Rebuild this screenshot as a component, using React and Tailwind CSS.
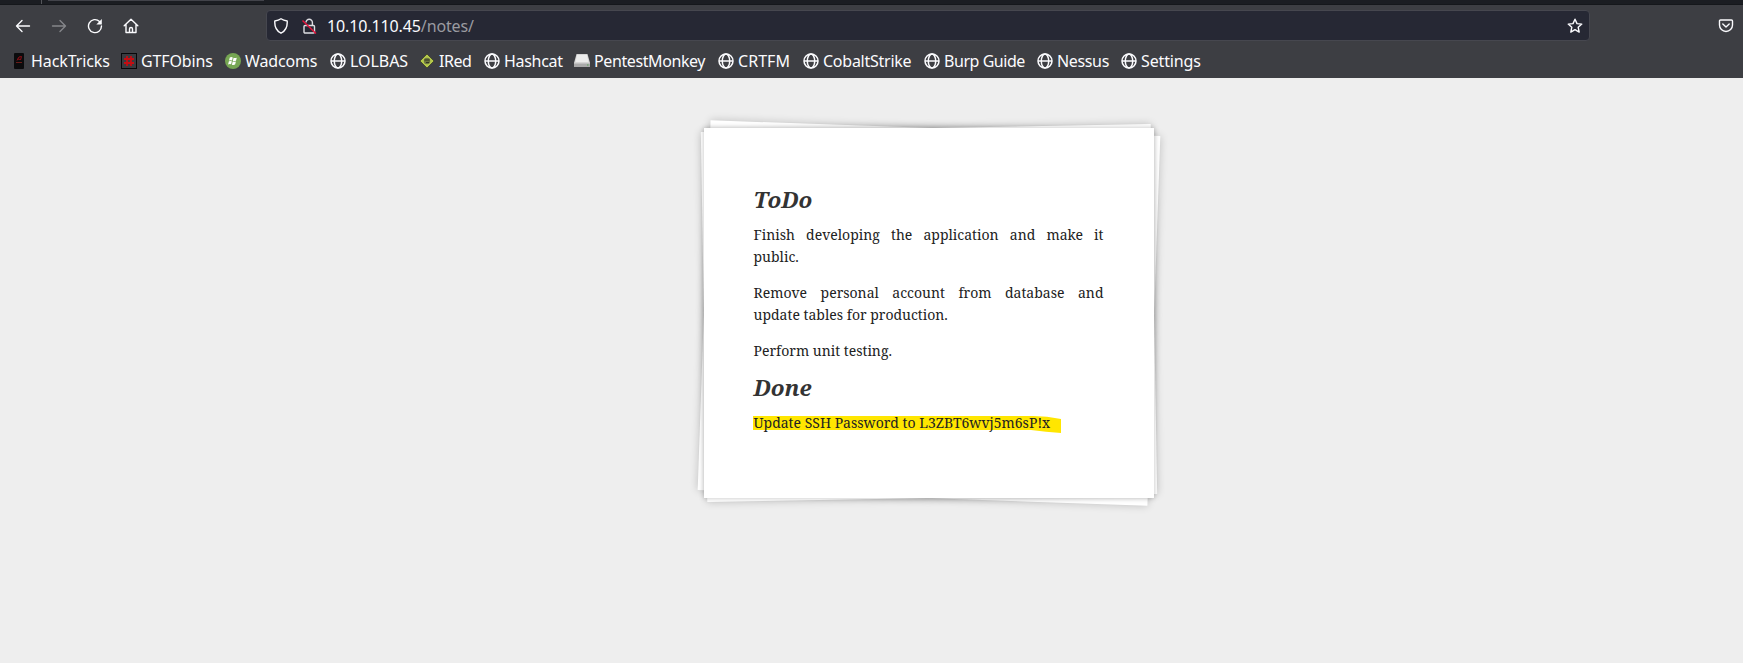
import React from "react";

const Globe = () => (
  <svg width="16" height="16" viewBox="0 0 16 16" fill="none" stroke="#fbfbfe" strokeWidth="1.5">
    <circle cx="8" cy="8" r="7" />
    <ellipse cx="8" cy="8" rx="3.7" ry="7" />
    <path d="M1 8h14" />
  </svg>
);
const Tricks = () => (
  <svg width="16" height="16" viewBox="0 0 16 16">
    <rect x="3" width="10" height="16" rx="1" fill="#0b0b0d" />
    <path d="M6 7.5 8 4l2.500-.5L9.500 7M6.500 6l3 .5" stroke="#8d0f16" fill="none" />
    <path d="M5 9.500h6" stroke="#6a1c18" />
  </svg>
);
const Hash = () => (
  <svg width="16" height="16" viewBox="0 0 16 16">
    <rect x=".5" y=".5" width="15" height="15" fill="#3a3b40" stroke="#08080a" />
    <path d="M6 3v10M10 3v10M3 6h10M3 10h10" stroke="#c40d12" strokeWidth="1.8" />
  </svg>
);
const Windows = () => (
  <svg width="16" height="16" viewBox="0 0 16 16">
    <circle cx="8" cy="8" r="8" fill="#76a653" />
    <path d="M4.800 4.500q1.500-.8 3-.1L7 7.500q-1.500-.6-3 .1zM8.600 4.800q1.500.6 3.200-.1L11 7.800q-1.500.7-3.200.1zM3.900 8.300q1.500-.7 3-.1L6.100 11.300q-1.500-.6-3 .1zM7.700 8.600q1.500.6 3.200-.1l-.8 3.100q-1.500.7-3.200.1z" fill="#fff" />
  </svg>
);
const Diamond = () => (
  <svg width="16" height="16" viewBox="0 0 16 16">
    <path d="M8 1 15 8 8 15 1 8z" fill="#b5c94c" stroke="#25271f" strokeWidth=".6" />
    <circle cx="8" cy="8" r="3.200" fill="#6d7540" />
    <path d="M5.500 7h5M7 9.500h3" stroke="#2b2f1e" strokeWidth=".9" />
  </svg>
);
const Drive = () => (
  <svg width="16" height="16" viewBox="0 0 16 16">
    <path d="M2.500 1h11L16 10v4H0v-4z" fill="#d5d5d5" />
    <path d="M0 10.500h16V14H0z" fill="#a9a9aa" />
    <path d="M3 2h10l1.500 7h-13z" fill="#ececec" />
    <path d="M13 12h1.500" stroke="#53a553" />
  </svg>
);

const bookmarks = [
  ["HackTricks", Tricks, "w-[110px] tracking-[-0.1px]"],
  ["GTFObins", Hash, "w-[104px] tracking-[-0.14px]"],
  ["Wadcoms", Windows, "w-[105px] tracking-[-0.16px]"],
  ["LOLBAS", Globe, "w-[89px] tracking-[-0.05px]"],
  ["IRed", Diamond, "w-[65px] tracking-[-0.5px]"],
  ["Hashcat", Globe, "w-[90px] tracking-[-0.3px]"],
  ["PentestMonkey", Drive, "w-[144px] tracking-[-0.4px]"],
  ["CRTFM", Globe, "w-[85px] tracking-[0.05px]"],
  ["CobaltStrike", Globe, "w-[121px] tracking-[-0.25px]"],
  ["Burp Guide", Globe, "w-[113px] tracking-[-0.45px]"],
  ["Nessus", Globe, "w-[84px] tracking-[-0.35px]"],
  ["Settings", Globe, "w-[90px] tracking-[-0.15px]"],
];

const Stroke = ({ children, className = "" }) => (
  <svg width="16" height="16" viewBox="0 0 16 16" fill="none" stroke="currentColor" strokeWidth="1.4" strokeLinecap="round" strokeLinejoin="round" className={"shrink-0 " + className}>
    {children}
  </svg>
);

export default function App() {
  return (
    <div className="flex h-[663px] w-[1743px] flex-col overflow-hidden bg-[#eeeeee] font-['Noto_Sans',sans-serif]">
      <div className="flex h-[5px] shrink-0 border-b border-[#15171b] bg-[#1b1d22]">
        <div className="h-full w-[42px] border-r border-[#55565b]" />
        <div className="ml-[6px] h-px w-[216px] bg-[#42434a]" />
      </div>
      <header className="h-[73px] shrink-0 bg-[#3d3e43] text-[#fbfbfe]">
        <div className="flex h-[41px] items-center pl-[15px] pr-[9px]">
          <Stroke><path d="M14.500 8H1.500M7 2.500 1.500 8 7 13.500" /></Stroke>
          <Stroke className="ml-5 text-[#85868a]"><path d="M1.500 8h13M9 2.500 14.500 8 9 13.500" /></Stroke>
          <Stroke className="ml-5"><path d="M12.500 3.400A6.500 6.500 0 1 0 14.500 8" /><path d="M14.800 1v5.500H9.300z" fill="currentColor" stroke="none" /></Stroke>
          <Stroke className="ml-5"><path d="M1.200 7.800 8 1.200l6.800 6.600M3 6.500v8h10v-8M6.500 14.500V11a1.500 1.500 0 0 1 3 0v3.500" /></Stroke>
          <div className="ml-[127px] flex h-[31px] w-[1324px] items-center rounded border border-[#46474f] bg-[#262834] pl-[6px] pr-[6px]">
            <Stroke><path d="M8 .8c2 1.400 4 1.900 6.200 2.200C14.600 9 12.500 13 8 15.200 3.500 13 1.400 9 1.800 3 4 2.700 6 2.200 8 .8z" /></Stroke>
            <svg width="16" height="16" viewBox="0 0 16 16" fill="none" stroke="#dddde2" strokeWidth="1.400" className="ml-3">
              <rect x="3" y="7.500" width="10.500" height="7.500" rx="1" />
              <path d="M5 4.500a3.200 3.200 0 0 1 6.400 0V7" />
              <path d="M1.500 2.500 15 15.500" stroke="#e5143c" strokeWidth="1.500" />
            </svg>
            <span className="ml-[10px] whitespace-nowrap text-[16px] leading-5 tracking-[-0.12px]">10.10.110.45<span className="text-[#9a9ba1]">/notes/</span></span>
            <Stroke className="ml-auto"><path d="m8 1.200 2 4.400 4.800.5-3.600 3.200 1 4.800L8 11.700l-4.200 2.400 1-4.800L1.200 6.100 6 5.600z" /></Stroke>
          </div>
          <Stroke className="ml-auto"><path d="M2.500 2h11q1 0 1 1v4a6.500 6.500 0 0 1-13 0V3q0-1 1-1zM4.800 6 8 9l3.200-3" /></Stroke>
        </div>
        <nav className="flex h-[30px] items-center pl-[11px]">
          {bookmarks.map(([name, Icon, width]) => (
            <div key={name} className={"flex shrink-0 items-center gap-1 whitespace-nowrap text-[16px] leading-5 " + width}>
              <Icon />
              <span>{name}</span>
            </div>
          ))}
        </nav>
      </header>
      <main className="flex justify-center pt-[50px] pl-[114px]">
        <article className="relative isolate h-[370px] w-[450px] bg-white px-[50px] pt-[56px] font-['Noto_Serif','DejaVu_Serif',serif] text-[14px] leading-[22px] text-[#222]">
          <div className="absolute inset-0 -z-10 rotate-[2deg] bg-white shadow-[0_0_8px_rgba(0,0,0,0.2)]" />
          <div className="absolute inset-0 -z-10 -rotate-1 bg-white shadow-[0_0_8px_rgba(0,0,0,0.2)]" />
          <div className="absolute inset-0 -z-10 bg-white shadow-[0_0_5px_rgba(0,0,0,0.25)]" />
          <h1 className="text-[22.4px] font-bold italic leading-[32px] text-[#333]">ToDo</h1>
          <p className="mt-[8px] text-justify">Finish developing the application and make it public.</p>
          <p className="mt-[14px] text-justify">Remove personal account from database and update tables for production.</p>
          <p className="mt-[14px]">Perform unit testing.</p>
          <h1 className="mt-[10px] text-[22.4px] font-bold italic leading-[32px] text-[#333]">Done</h1>
          <p className="relative isolate mt-[8px] whitespace-nowrap">
            <svg className="absolute top-[3px] left-[-0.5px] -z-10" width="308" height="20" viewBox="0 0 308 20">
              <path d="M0 1h280q14 0 28 3v14q-15-1-30-3H0z" fill="#ffe600" />
            </svg>
            Update SSH Password to L3ZBT6wvj5m6sP!x
          </p>
        </article>
      </main>
    </div>
  );
}
